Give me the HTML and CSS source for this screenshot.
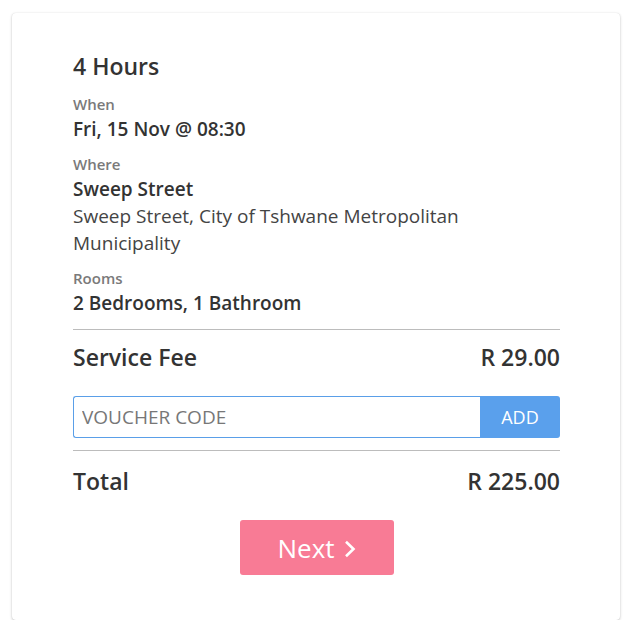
FILE: index.html
```html
<!DOCTYPE html>
<html>
<head>
<meta charset="utf-8">
<link rel="stylesheet" href="styles.css">
</head>
<body>
<div class="card">
  <div class="content">
    <h2 class="title">4 Hours</h2>
    <div class="field">
      <div class="label">When</div>
      <div class="value strong">Fri, 15 Nov @ 08:30</div>
    </div>
    <div class="field">
      <div class="label">Where</div>
      <div class="value strong">Sweep Street</div>
      <div class="value">Sweep Street, City of Tshwane Metropolitan Municipality</div>
    </div>
    <div class="field">
      <div class="label">Rooms</div>
      <div class="value strong">2 Bedrooms, 1 Bathroom</div>
    </div>
    <hr class="rule">
    <div class="row">
      <span>Service Fee</span>
      <span>R 29.00</span>
    </div>
    <div class="voucher">
      <input class="voucher-input" type="text" placeholder="VOUCHER CODE">
      <button class="voucher-btn">ADD</button>
    </div>
    <hr class="rule rule-low">
    <div class="row row-total">
      <span>Total</span>
      <span>R 225.00</span>
    </div>
    <div class="actions">
      <button class="next">Next<svg class="chev" width="12" height="18" viewBox="0 0 12 18"><path d="M2 1.8 L9.5 9 L2 16.2" fill="none" stroke="#fff" stroke-width="2.6"/></svg></button>
    </div>
  </div>
</div>
</body>
</html>
```
FILE: styles.css
```css
* { box-sizing: border-box; }
body {
  margin: 0;
  padding: 13px 9px 0 12px;
  font-family: "Open Sans", sans-serif;
  color: #333;
  background: #fff;
}
.card {
  width: 608px;
  height: 607px;
  border-radius: 4px;
  background: #fff;
  box-shadow: 0 1px 3px rgba(0,0,0,0.22), 0 0 1px rgba(0,0,0,0.12);
  padding-top: 38px;
}
.content {
  width: 487px;
  margin-left: 61px;
}
.title {
  margin: 0 0 14px;
  font-size: 23px;
  font-weight: 600;
  line-height: 30px;
  color: #333;
}
.field { margin-bottom: 12px; }
.label {
  font-size: 15px;
  font-weight: 600;
  color: #7a7a7a;
  line-height: 19px;
  margin-bottom: 2px;
}
.value {
  font-size: 19px;
  line-height: 27px;
  color: #444;
}
.value.strong { font-weight: 600; color: #333; }
.rule {
  border: 0;
  border-top: 1px solid #bcbcbc;
  margin: 11px 0 0;
}
.rule-low { margin-top: 12px; }
.row {
  display: flex;
  justify-content: space-between;
  font-size: 23px;
  font-weight: 600;
  line-height: 30px;
  color: #333;
  margin-top: 12px;
}
.row-total { margin-top: 15px; }
.voucher {
  display: flex;
  margin-top: 24px;
  height: 42px;
}
.voucher-input {
  flex: 1;
  min-width: 0;
  border: 1px solid #5a9fe8;
  border-right: 0;
  border-radius: 3px 0 0 3px;
  padding: 0 8px;
  font-family: "Open Sans", sans-serif;
  font-size: 19px;
  color: #333;
  outline: none;
}
.voucher-input::placeholder { color: #777; }
.voucher-btn {
  width: 80px;
  border: 0;
  border-radius: 0 3px 3px 0;
  background: #5aa0ec;
  color: #fff;
  font-family: "Open Sans", sans-serif;
  font-size: 18px;
}
.actions {
  display: flex;
  justify-content: center;
  margin-top: 24px;
}
.next {
  width: 154px;
  height: 55px;
  border: 0;
  border-radius: 3px;
  background: #f87b95;
  color: #fff;
  font-family: "Open Sans", sans-serif;
  font-size: 26px;
  display: flex;
  align-items: center;
  justify-content: center;
  gap: 9px;
  padding: 0;
}
.chev { margin-top: 3px; }
```
